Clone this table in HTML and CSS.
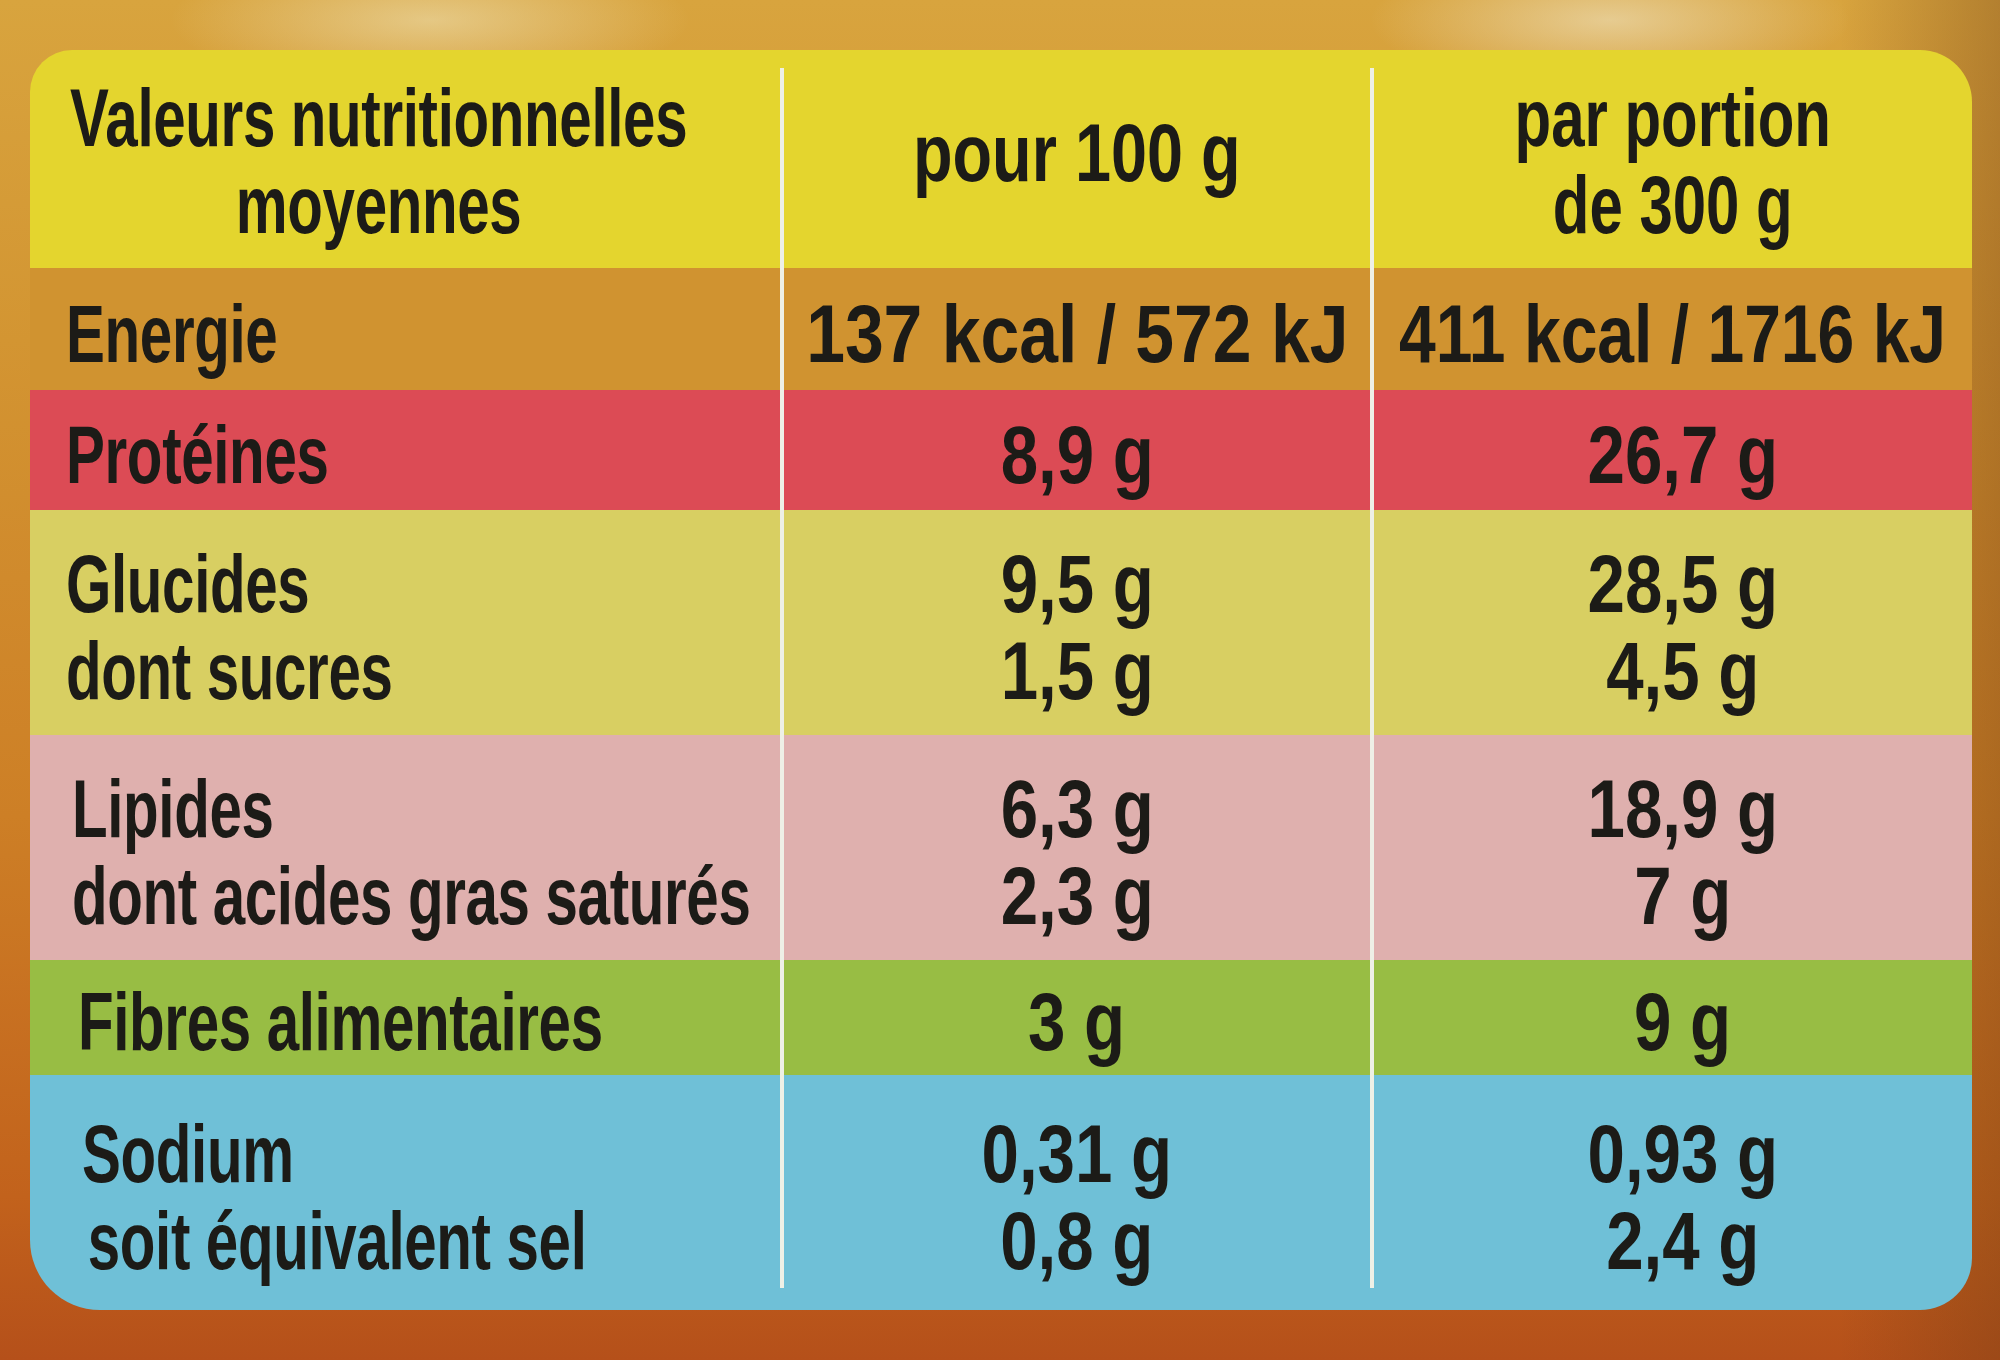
FILE: index.html
```html
<!DOCTYPE html>
<html lang="fr">
<head>
<meta charset="utf-8">
<title>Valeurs nutritionnelles</title>
<link rel="stylesheet" href="styles.css">
</head>
<body>
<div class="scene">
  <div class="panel">
    <div class="band band-head r1"></div>
    <div class="band band-energy r2"></div>
    <div class="band band-prot r3"></div>
    <div class="band band-gluc r4"></div>
    <div class="band band-lip r5"></div>
    <div class="band band-fib r6"></div>
    <div class="band band-sod r7"></div>

    <div class="divider d1"></div>
    <div class="divider d2"></div>

    <div class="cell label head-label r1 c1"><div class="t"><span>Valeurs nutritionnelles</span><span>moyennes</span></div></div>
    <div class="cell value head r1 c2"><div class="t"><span>pour 100 g</span></div></div>
    <div class="cell value head head-two r1 c3"><div class="t"><span>par portion</span><span>de 300 g</span></div></div>

    <div class="cell label r2 c1"><div class="t"><span>Energie</span></div></div>
    <div class="cell value energy-a r2 c2"><div class="t"><span>137 kcal / 572 kJ</span></div></div>
    <div class="cell value energy-b r2 c3"><div class="t"><span>411 kcal / 1716 kJ</span></div></div>

    <div class="cell label r3 c1"><div class="t"><span>Protéines</span></div></div>
    <div class="cell value r3 c2"><div class="t"><span>8,9 g</span></div></div>
    <div class="cell value r3 c3"><div class="t"><span>26,7 g</span></div></div>

    <div class="cell label r4 c1"><div class="t"><span>Glucides</span><span>dont sucres</span></div></div>
    <div class="cell value r4 c2"><div class="t"><span>9,5 g</span><span>1,5 g</span></div></div>
    <div class="cell value r4 c3"><div class="t"><span>28,5 g</span><span>4,5 g</span></div></div>

    <div class="cell label label-lip r5 c1"><div class="t"><span>Lipides</span><span>dont acides gras saturés</span></div></div>
    <div class="cell value r5 c2"><div class="t"><span>6,3 g</span><span>2,3 g</span></div></div>
    <div class="cell value r5 c3"><div class="t"><span>18,9 g</span><span>7 g</span></div></div>

    <div class="cell label label-fib r6 c1"><div class="t"><span>Fibres alimentaires</span></div></div>
    <div class="cell value r6 c2"><div class="t"><span>3 g</span></div></div>
    <div class="cell value r6 c3"><div class="t"><span>9 g</span></div></div>

    <div class="cell label label-sod r7 c1"><div class="t"><span>Sodium</span><span class="indent">soit équivalent sel</span></div></div>
    <div class="cell value r7 c2"><div class="t"><span>0,31 g</span><span>0,8 g</span></div></div>
    <div class="cell value r7 c3"><div class="t"><span>0,93 g</span><span>2,4 g</span></div></div>
  </div>
</div>
</body>
</html>
```

FILE: styles.css
```css
html, body {
  margin: 0;
  padding: 0;
}

body {
  width: 2000px;
  height: 1360px;
  overflow: hidden;
  background:
    radial-gradient(ellipse 260px 70px at 430px 20px, rgba(240, 230, 190, 0.55), rgba(240, 230, 190, 0) 100%),
    radial-gradient(ellipse 240px 70px at 1610px 20px, rgba(240, 230, 200, 0.6), rgba(240, 230, 200, 0) 100%),
    linear-gradient(90deg, rgba(120, 60, 20, 0) 92%, rgba(110, 60, 20, 0.35) 100%),
    linear-gradient(180deg, #d8a43e 0%, #d39532 25%, #cd7f26 60%, #c2621c 88%, #b5501a 100%);
  font-family: "Liberation Sans", Arial, sans-serif;
  color: #1c1b17;
}

.scene {
  padding: 50px 28px 0 30px;
}

.panel {
  display: grid;
  grid-template-columns: 750px 4px 586px 4px 598px;
  grid-template-rows: 218px 122px 120px 225px 225px 115px 235px;
  width: 1942px;
  border-radius: 42px 52px 52px 70px;
  overflow: hidden;
}

.band {
  grid-column: 1 / -1;
}

.band-head   { background: #e4d52e; }
.band-energy { background: #d09330; }
.band-prot   { background: #dc4b55; }
.band-gluc   { background: #d8cf62; }
.band-lip    { background: #dfb0ae; }
.band-fib    { background: #98bd44; }
.band-sod    { background: #6fc0d7; }

.r1 { grid-row: 1; }
.r2 { grid-row: 2; }
.r3 { grid-row: 3; }
.r4 { grid-row: 4; }
.r5 { grid-row: 5; }
.r6 { grid-row: 6; }
.r7 { grid-row: 7; }

.c1 { grid-column: 1; }
.c2 { grid-column: 3; }
.c3 { grid-column: 5; padding-left: 20px; }

.divider {
  grid-row: 1 / -1;
  background: #eef0e6;
  margin: 18px 0 22px;
}
.d1 { grid-column: 2; }
.d2 { grid-column: 4; }

.cell {
  display: flex;
  flex-direction: column;
  justify-content: center;
  font-size: 81px;
  line-height: 87px;
  font-weight: 700;
  white-space: nowrap;
  min-width: 0;
}

.t {
  display: flex;
  flex-direction: column;
  flex: none;
}

.label {
  align-items: flex-start;
  padding-left: 36px;
  padding-top: 10px;
}

.label .t {
  align-items: flex-start;
  transform: scaleX(0.72);
  transform-origin: left center;
  letter-spacing: -0.5px;
}

.label-lip { padding-left: 42px; }
.label-fib { padding-left: 48px; }
.label-sod { padding-left: 52px; }

.indent { padding-left: 8px; }

.value {
  align-items: center;
  padding-top: 10px;
}

.value .t {
  align-items: center;
  transform: scaleX(0.83);
  transform-origin: center center;
}

.energy-a .t { transform: scaleX(0.86); }
.energy-b { padding-left: 0; }
.energy-b .t { transform: scaleX(0.815); }

.head-label {
  align-items: center;
  padding-left: 0;
  padding-right: 52px;
  padding-top: 6px;
  padding-bottom: 0;
}

.head-label .t {
  align-items: center;
  transform-origin: center center;
}

.head {
  padding-top: 0;
  padding-bottom: 12px;
}

.head .t {
  transform: scaleX(0.8);
}

.head-two {
  padding-top: 6px;
  padding-bottom: 0;
  padding-left: 0;
}

.head-two .t {
  transform: scaleX(0.74);
}
```
